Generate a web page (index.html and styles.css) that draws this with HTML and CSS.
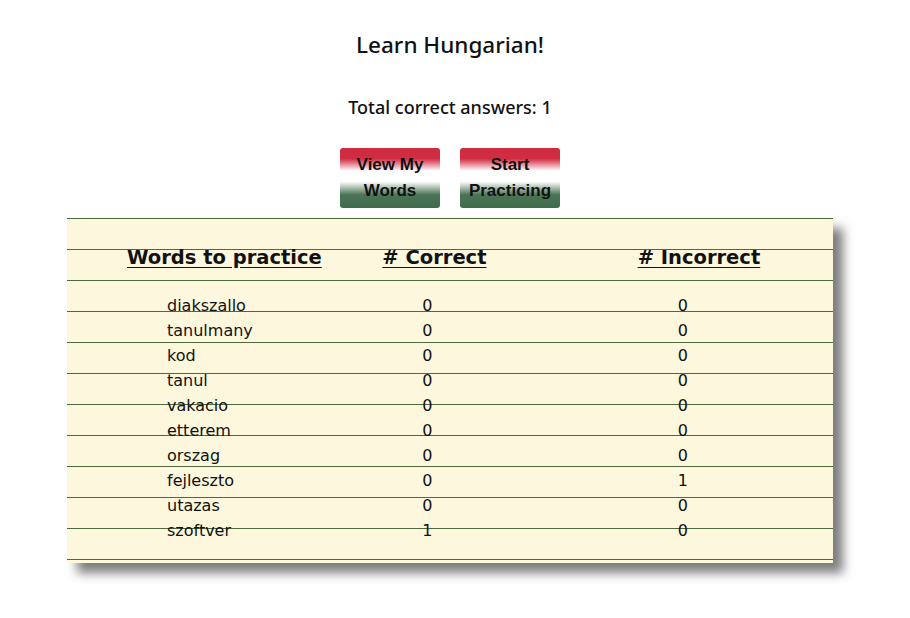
FILE: index.html
```html
<!DOCTYPE html>
<html>
<head>
<meta charset="utf-8">
<link rel="stylesheet" href="styles.css">
</head>
<body>
<div class="app">
  <h1 class="title">Learn Hungarian!</h1>
  <p class="total">Total correct answers: 1</p>
  <div class="buttons">
    <button class="btn">View My<br>Words</button>
    <button class="btn">Start<br>Practicing</button>
  </div>
  <div class="paper">
    <div class="grid">
      <div class="th">Words to practice</div>
      <div class="th"># Correct</div>
      <div class="th"># Incorrect</div>

      <div class="td">diakszallo</div><div class="td">0</div><div class="td">0</div>
      <div class="td">tanulmany</div><div class="td">0</div><div class="td">0</div>
      <div class="td">kod</div><div class="td">0</div><div class="td">0</div>
      <div class="td">tanul</div><div class="td">0</div><div class="td">0</div>
      <div class="td">vakacio</div><div class="td">0</div><div class="td">0</div>
      <div class="td">etterem</div><div class="td">0</div><div class="td">0</div>
      <div class="td">orszag</div><div class="td">0</div><div class="td">0</div>
      <div class="td">fejleszto</div><div class="td">0</div><div class="td">1</div>
      <div class="td">utazas</div><div class="td">0</div><div class="td">0</div>
      <div class="td">szoftver</div><div class="td">1</div><div class="td">0</div>
    </div>
  </div>
</div>
</body>
</html>
```
FILE: styles.css
```css
html, body {
  margin: 0;
  padding: 0;
  background: #ffffff;
}
body {
  min-height: 618px;
}
.app {
  width: 900px;
  display: flex;
  flex-direction: column;
  align-items: center;
  color: #111;
  padding-bottom: 50px;
}
.title {
  margin: 30px 0 0 0;
  font-family: "Noto Sans", sans-serif;
  font-size: 22.5px;
  font-weight: 500;
  line-height: 30px;
  text-align: center;
}
.total {
  margin: 35px 0 0 0;
  font-family: "Noto Sans", sans-serif;
  font-size: 18px;
  font-weight: 500;
  line-height: 24px;
  text-align: center;
}
.buttons {
  display: flex;
  gap: 20px;
  margin-top: 29px;
}
.btn {
  width: 100px;
  height: 60px;
  padding: 4px 0;
  border: none;
  border-radius: 3px;
  font-family: "Liberation Sans", Arial, sans-serif;
  font-weight: bold;
  font-size: 17px;
  line-height: 26px;
  color: #111;
  background: linear-gradient(to bottom, #cf2a40 0%, #d02d42 18%, #ffffff 38%, #ffffff 56%, #4a7455 78%, #3f6b4b 100%);
}
.paper {
  align-self: flex-start;
  margin: 10px 0 0 67px;
  width: 766px;
  padding: 24px 0 20px 0;
  background-color: #fdf8dd;
  background-image: repeating-linear-gradient(to bottom, #4e6a3c 0px, #4e6a3c 1px, transparent 1px, transparent 31px);
  box-shadow: 10px 10px 10px #7d7d7d;
}
.grid {
  display: grid;
  grid-template-columns: 1fr 1fr 1fr;
  font-family: "DejaVu Sans", "Comic Sans MS", sans-serif;
}
.th {
  padding-left: 60px;
  font-size: 19.5px;
  font-weight: bold;
  line-height: 31px;
  text-decoration: underline;
  text-underline-offset: 3px;
  margin-bottom: 20px;
}
.td {
  padding-left: 100px;
  font-size: 16px;
  line-height: 25px;
}
```
